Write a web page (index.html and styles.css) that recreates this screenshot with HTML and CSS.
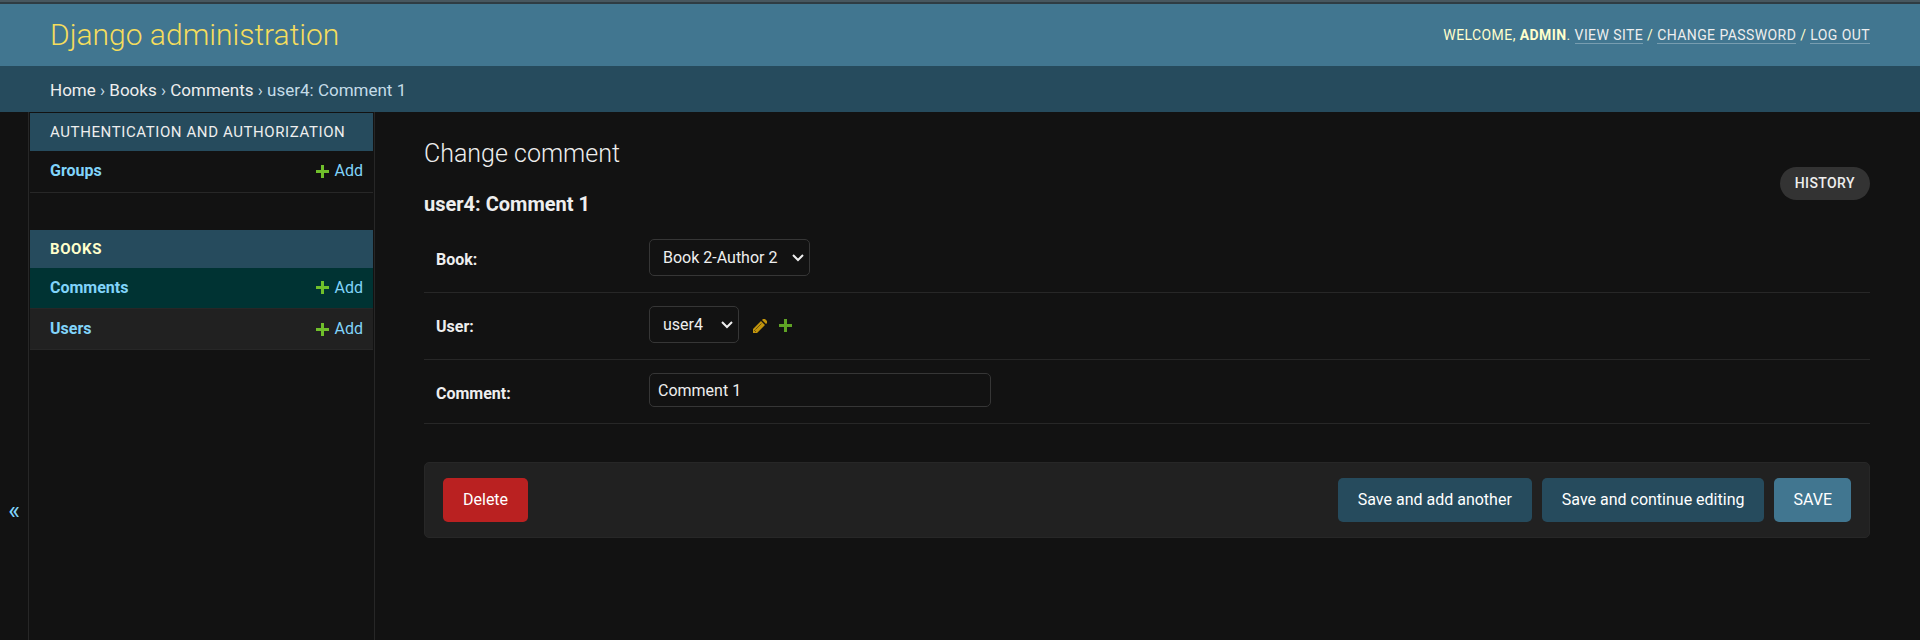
FILE: index.html
```html
<!DOCTYPE html>
<html lang="en">
<head>
<meta charset="utf-8">
<title>user4: Comment 1 | Change comment | Django site admin</title>
<link rel="stylesheet" href="styles.css">
</head>
<body>
<svg class="sprite" aria-hidden="true">
  <symbol id="plus" viewBox="0 0 13 13"><path d="M5 0h3v5h5v3H8v5H5V8H0V5h5z"/></symbol>
  <symbol id="chevron" viewBox="0 0 12 8"><path d="M1 1l5 5 5-5" fill="none" stroke="currentColor" stroke-width="2"/></symbol>
</svg>
<header class="header">
  <h1 class="branding"><a href="#">Django administration</a></h1>
  <div class="user-tools">Welcome, <strong>admin</strong>. <a href="#">View site</a> / <a href="#">Change password</a> / <a href="#">Log out</a></div>
</header>
<nav class="breadcrumbs" aria-label="Breadcrumbs"><a href="#">Home</a> › <a href="#">Books</a> › <a href="#">Comments</a> › user4: Comment 1</nav>
<div class="main">
  <button class="toggle" type="button" aria-label="Toggle navigation">«</button>
  <nav class="sidebar" aria-label="Sidebar">
    <table class="module">
      <caption><a href="#">Authentication and Authorization</a></caption>
      <tbody>
        <tr><th scope="row"><a href="#">Groups</a></th><td><a class="add" href="#"><svg class="icon"><use href="#plus"/></svg>Add</a></td></tr>
      </tbody>
    </table>
    <table class="module">
      <caption class="current"><a href="#">Books</a></caption>
      <tbody>
        <tr class="current"><th scope="row"><a href="#">Comments</a></th><td><a class="add" href="#"><svg class="icon"><use href="#plus"/></svg>Add</a></td></tr>
        <tr class="even"><th scope="row"><a href="#">Users</a></th><td><a class="add" href="#"><svg class="icon"><use href="#plus"/></svg>Add</a></td></tr>
      </tbody>
    </table>
  </nav>
  <main class="content">
    <div class="heading">
      <div>
        <h2 class="title">Change comment</h2>
        <h3 class="subtitle">user4: Comment 1</h3>
      </div>
      <a class="history" href="#">History</a>
    </div>
    <form>
      <div class="row">
        <label for="book">Book:</label>
        <div class="field">
          <span class="select"><select id="book"><option>Book 2-Author 2</option></select><svg class="chevron"><use href="#chevron"/></svg></span>
        </div>
      </div>
      <div class="row">
        <label for="user">User:</label>
        <div class="field">
          <span class="select"><select id="user"><option>user4</option></select><svg class="chevron"><use href="#chevron"/></svg></span>
          <a class="related" href="#" aria-label="Change selected user">
            <svg class="pencil" viewBox="0 0 14 14"><path d="M0 14V10L8 2l4 4-8 8zM9 1l1-1h2l2 2v2l-1 1z" fill="#c1940c"/><path d="M2.500 10.500l6-6M1 11l2 2" stroke="#6b520f" stroke-width="1"/></svg>
          </a>
          <a class="related add-related" href="#" aria-label="Add another user"><svg class="icon"><use href="#plus"/></svg></a>
        </div>
      </div>
      <div class="row">
        <label for="comment">Comment:</label>
        <div class="field"><input class="text" id="comment" type="text" value="Comment 1"></div>
      </div>
      <div class="submit-row">
        <button class="button delete" type="button">Delete</button>
        <button class="button" type="submit">Save and add another</button>
        <button class="button" type="submit">Save and continue editing</button>
        <button class="button primary" type="submit">SAVE</button>
      </div>
    </form>
  </main>
</div>
</body>
</html>
```
FILE: styles.css
```css
* { box-sizing: border-box; }

body {
  margin: 0;
  min-height: 100vh;
  display: flex;
  flex-direction: column;
  background: #121212;
  color: #eee;
  font: 16px/20px Roboto, "Liberation Sans", sans-serif;
}

a { color: #81d4fa; text-decoration: none; }
.sprite { display: none; }

.header {
  display: flex;
  align-items: center;
  justify-content: space-between;
  padding: 15px 50px 13px;
  border-top: 2px solid #47575f;
  box-shadow: inset 0 2px #2f3c43;
  background: #417690;
  color: #ffc;
}
.branding { margin: 0; font-size: 30px; line-height: 36px; font-weight: 300; }
.branding a { color: #f5dd5d; }
.user-tools { font-size: 14px; letter-spacing: 0.03em; text-transform: uppercase; }
.user-tools a { color: #eee; border-bottom: 1px solid #779db0; }

.breadcrumbs {
  padding: 13px 50px 11px;
  background: #264b5d;
  color: #c4dce8;
  font-size: 17px;
  line-height: 22px;
}
.breadcrumbs a { color: #eee; }

.main { display: flex; flex: 1; }
.toggle {
  width: 28px;
  padding: 270px 0 0;
  border: 0;
  background: none;
  color: #81d4fa;
  font: 25px/28px Roboto, sans-serif;
}
.sidebar {
  width: 347px;
  padding: 1px 1px 0;
  border: solid #272727;
  border-width: 0 1px;
}
.module { width: 100%; margin-bottom: 37px; border-collapse: collapse; }
.module caption {
  padding: 9px 20px;
  background: #264b5d;
  font-size: 15px;
  letter-spacing: 0.04em;
  text-align: left;
  text-transform: uppercase;
}
.module caption a { color: #eee; }
.module caption.current a { color: #ffc; font-weight: 700; }
.module th, .module td { height: 41px; padding: 0 10px; border-bottom: 1px solid #272727; }
.module th { padding-left: 20px; text-align: left; }
.module td { width: 69px; }
.module tr.current { background: #003333; }
.module tr.even { background: #212121; }
.add { display: flex; align-items: center; justify-content: flex-end; gap: 6px; }
.icon { width: 13px; height: 13px; fill: #70bf2b; }

.content { flex: 1; padding: 27px 50px 25px 49px; }
.heading { display: flex; justify-content: space-between; align-items: flex-start; }
.title { margin: 0 0 23px; font-size: 25px; line-height: 30px; font-weight: 300; }
.subtitle { margin: 0 0 18px; font-size: 20px; line-height: 24px; }
.history {
  margin-top: 28px;
  padding: 6px 15px 7px;
  border-radius: 17px;
  background: #333;
  color: #eee;
  font-size: 14px;
  font-weight: 500;
  letter-spacing: 0.03em;
  text-transform: uppercase;
}

.row {
  display: flex;
  align-items: flex-start;
  padding: 13px 12px 16px;
  border-bottom: 1px solid #272727;
}
.row:first-child { padding-top: 5px; }
.row:last-of-type { padding-bottom: 15px; }
.row label { width: 213px; padding-top: 11px; font-weight: 700; }
.field { display: flex; align-items: center; }
.select { display: grid; align-items: center; justify-items: end; }
.select select, .chevron { grid-area: 1 / 1; }
.chevron { width: 12px; height: 8px; margin-right: 6px; pointer-events: none; }
.select select, .text {
  appearance: none;
  border: 1px solid #363636;
  border-radius: 5px;
  background: #121212;
  color: #eee;
  font: inherit;
}
.select select { min-width: 90px; height: 37px; padding: 0 31px 0 13px; }
.text { width: 342px; height: 34px; padding: 0 8px; }
.related { display: flex; margin: 2px 0 0 14px; }
.add-related { margin-left: 12px; }
.add-related .icon { fill: #5fa225; }
.pencil { width: 14px; height: 14px; }

.submit-row {
  display: flex;
  gap: 10px;
  margin-top: 38px;
  padding: 15px 18px;
  border: 1px solid #272727;
  border-radius: 5px;
  background: #212121;
}
.button {
  height: 44px;
  padding: 0 20px;
  border: 0;
  border-radius: 5px;
  background: #264b5d;
  color: #fff;
  font: inherit;
}
.delete { margin-right: auto; background: #ba2121; }
.primary { padding: 0 19px; background: #417690; }
```
